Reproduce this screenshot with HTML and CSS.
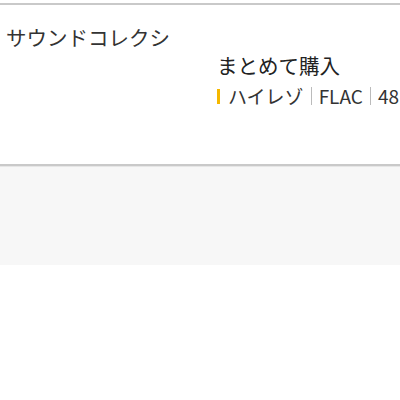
FILE: index.html
```html
<!DOCTYPE html>
<html lang="ja">
<head>
<meta charset="utf-8">
<link rel="stylesheet" href="styles.css">
</head>
<body>
<div class="card">
  <div class="title">サウンドコレクシ</div>
  <div class="info">
    <div class="buy">まとめて購入</div>
    <div class="tags"><span class="mark"></span><span>ハイレゾ</span><span class="sep"></span><span>FLAC</span><span class="sep"></span><span>48</span></div>
  </div>
</div>
<div class="panel"></div>
</body>
</html>
```
FILE: styles.css
```css
html, body { margin: 0; padding: 0; background: #fff; }
body { font-family: "Noto Sans CJK JP", "Noto Sans", sans-serif; color: #222; overflow: hidden; width: 400px; }
.card {
  margin-top: 3px;
  border-top: 2px solid #c9c9c9;
  border-bottom: 2px solid #c9c9c9;
  height: 159px;
  display: flex;
  flex-direction: column;
}
.title {
  font-size: 20.5px;
  line-height: 28px;
  margin-top: 18px;
  padding-left: 6px;
  white-space: nowrap;
  color: #333;
}
.info { padding-left: 217px; white-space: nowrap; }
.buy { font-size: 20.5px; line-height: 28px; color: #222; }
.tags { display: flex; align-items: center; font-size: 19px; line-height: 28px; color: #333; margin-top: 3px; }
.mark { flex-shrink: 0; width: 3px; height: 15px; background: #f5b800; margin-right: 8px; }
.sep { flex-shrink: 0; width: 1px; height: 18px; background: #bbb; margin: 0 7px; }
.panel { height: 98px; background: #f7f7f7; border-top: 1px solid #e6e6e6; }
```
